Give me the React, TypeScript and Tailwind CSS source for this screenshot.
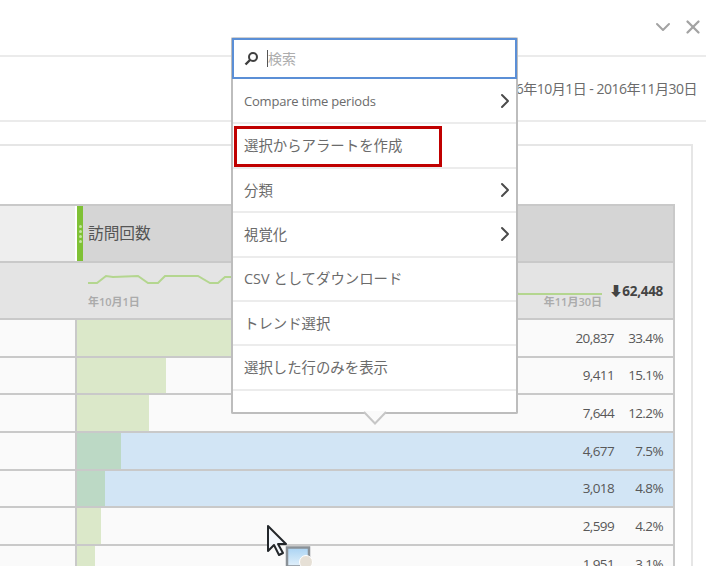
import { ChevronDown, ChevronRight, X } from 'lucide-react';

const rows = [
  { bar: 197, count: '20,837', pct: '33.4%', selected: false },
  { bar: 89, count: '9,411', pct: '15.1%', selected: false },
  { bar: 72, count: '7,644', pct: '12.2%', selected: false },
  { bar: 44, count: '4,677', pct: '7.5%', selected: true },
  { bar: 28, count: '3,018', pct: '4.8%', selected: true },
  { bar: 24, count: '2,599', pct: '4.2%', selected: false },
  { bar: 18, count: '1,951', pct: '3.1%', selected: false },
];

const menuItems = [
  { label: 'Compare time periods', arrow: true },
  { label: '選択からアラートを作成', arrow: false },
  { label: '分類', arrow: true },
  { label: '視覚化', arrow: true },
  { label: 'CSV としてダウンロード', arrow: false },
  { label: 'トレンド選択', arrow: false },
  { label: '選択した行のみを表示', arrow: false },
];

function ContextMenu() {
  return (
    <div className="absolute left-[231px] top-[37px] w-[287px] h-[377px] bg-white border-2 border-[#bdbdbd] rounded-[2px] border-t-[#cfcfcf]">
      <div className="h-[41px] mx-[-1px] mt-[-1px] mb-[1px] border-2 border-[#5b8fd6] flex items-center pl-[10px]">
        <svg width="15" height="15" viewBox="0 0 15 15" fill="none" stroke="#3f3f3f" strokeWidth="2">
          <circle cx="9" cy="6" r="4" />
          <path d="M6 9 L1.5 13.5" strokeWidth="2.4" />
        </svg>
        <span className="ml-[8px] w-px h-[17px] bg-[#555]" />
        <span className="text-[14px] text-[#adadad]">検索</span>
      </div>
      {menuItems.map((item) => (
        <div
          key={item.label}
          className="h-[44.4px] border-b-2 border-[#ececec] flex items-center justify-between pl-[11px] text-[14.4px] text-[#6b6b6b]"
        >
          <span className={item.label.startsWith('Compare') ? 'text-[13px] tracking-[-0.2px] pt-[2px]' : 'pt-[1px]'}>{item.label}</span>
          {item.arrow && <ChevronRight size={24} strokeWidth={2} className="text-[#4b4b4b] mr-[-1px] shrink-0" />}
        </div>
      ))}
      {/* red highlight */}
      <div className="absolute left-[1px] top-[87px] w-[208px] h-[41px] border-[3px] border-[#c00000]" />
      {/* pointer */}
      <svg className="absolute left-[130px] bottom-[-13px]" width="24" height="14" viewBox="0 0 24 14">
        <path d="M0 0 L24 0 L12 12.5 Z" fill="#fafafa" />
        <path d="M1 1 L12 12.5 L23 1" fill="none" stroke="#c6c6c6" strokeWidth="2" />
      </svg>
    </div>
  );
}

function DragCursor() {
  return (
    <svg className="absolute left-[265px] top-[524px]" width="48" height="42" viewBox="0 0 48 42">
      <defs>
        <linearGradient id="dragFill" x1="0" y1="0" x2="0" y2="1">
          <stop offset="0" stopColor="#a9d3f3" />
          <stop offset="1" stopColor="#e3f1fb" />
        </linearGradient>
      </defs>
      <path d="M3 2 L3 27 L9 21 L14 31 L18 29 L13 20 L21 20 Z" fill="#f4f8fd" stroke="#23272b" strokeWidth="2" strokeLinejoin="round" />
      <rect x="22" y="23.5" width="22" height="19" fill="url(#dragFill)" stroke="#8a9197" strokeWidth="2.5" />
      <circle cx="41" cy="38" r="6.5" fill="#e6e0d6" stroke="#fff" strokeWidth="1" />
    </svg>
  );
}

export default function App() {
  return (
    <div className="relative w-[706px] h-[566px] overflow-hidden bg-white font-['Open_Sans','Noto_Sans_CJK_JP',sans-serif] text-[#5c5c5c]">
      <div className="h-[57px] border-b-2 border-[#ebebeb] flex items-center justify-end gap-[7px] pr-[2px] pb-[2px] text-[#a3a3a3]">
        <ChevronDown size={24} strokeWidth={2} />
        <X size={22} strokeWidth={2.5} />
      </div>
      <div className="h-[65px] border-b-2 border-[#ebebeb] flex items-center justify-end pr-[9px] text-[14px] tracking-[-0.5px] text-[#6b6b6b]">
        2016年10月1日 - 2016年11月30日
      </div>
      <div className="h-[444px] pt-[22px] pr-[13px]">
        <div className="h-full border-t-2 border-r-2 border-[#e6e6e6] pt-[58px] pr-[16px]">
          <div className="border-t-2 border-r-2 border-[#c9c9c9]">
            <div className="h-[57px] flex border-b-2 border-[#c9c9c9]">
              <div className="w-[77px] bg-[#eeeeee] border-r-2 border-white" />
              <div className="w-[6px] bg-[#7fc135] flex flex-col items-center justify-center gap-[2px]">
                {[0, 1, 2, 3].map((i) => (
                  <span key={i} className="w-[3px] h-[3px] rounded-full bg-[#c5e59f]" />
                ))}
              </div>
              <div className="flex-1 bg-[#d5d5d5] pl-[5px] flex items-center text-[15.7px] text-[#555]">訪問回数</div>
            </div>
            <div className="h-[57px] flex bg-[#e4e4e4] border-b-2 border-[#c9c9c9]">
              <div className="w-[88px]" />
              <div className="w-[514px] pt-[11px]">
                <svg className="block" width="514" height="22" viewBox="0 0 514 22" fill="none" stroke="#b4d68f" strokeWidth="2">
                  <path d="M0 9 L9 9 L18 2 L25 3 L50 2 L60 9 L70 9 L77 2 L110 2 L122 9 L130 9 L137 3 L420 3 L430 20 L514 20" />
                </svg>
                <div className="flex justify-between mt-[-2px] text-[11px] font-semibold text-[#ababab]">
                  <span>年10月1日</span>
                  <span>年11月30日</span>
                </div>
              </div>
              <div className="flex-1 flex justify-end pr-[10px] pt-[19px] text-[13.5px] font-bold tracking-[-0.3px] text-[#444]">
                <span className="leading-[18px]">⬇62,448</span>
              </div>
            </div>
            {rows.map((row) => (
              <div
                key={row.count}
                className={`h-[37.7px] flex border-b-2 border-[#c9c9c9] text-[13.5px] tracking-[-0.6px] text-[#585858] ${row.selected ? 'bg-[#d2e5f5]' : 'bg-[#fafafa]'}`}
              >
                <div className="w-[75px] bg-[#fafafa] border-r-2 border-[#c9c9c9] shrink-0 box-content" />
                <div className={row.selected ? 'bg-[#bcd9c5]' : 'bg-[#dbe8c9]'} style={{ width: row.bar }} />
                <div className="ml-auto w-[60px] flex items-center justify-end">{row.count}</div>
                <div className="w-[59px] pr-[10px] flex items-center justify-end">{row.pct}</div>
              </div>
            ))}
          </div>
        </div>
      </div>
      <ContextMenu />
      <DragCursor />
    </div>
  );
}
